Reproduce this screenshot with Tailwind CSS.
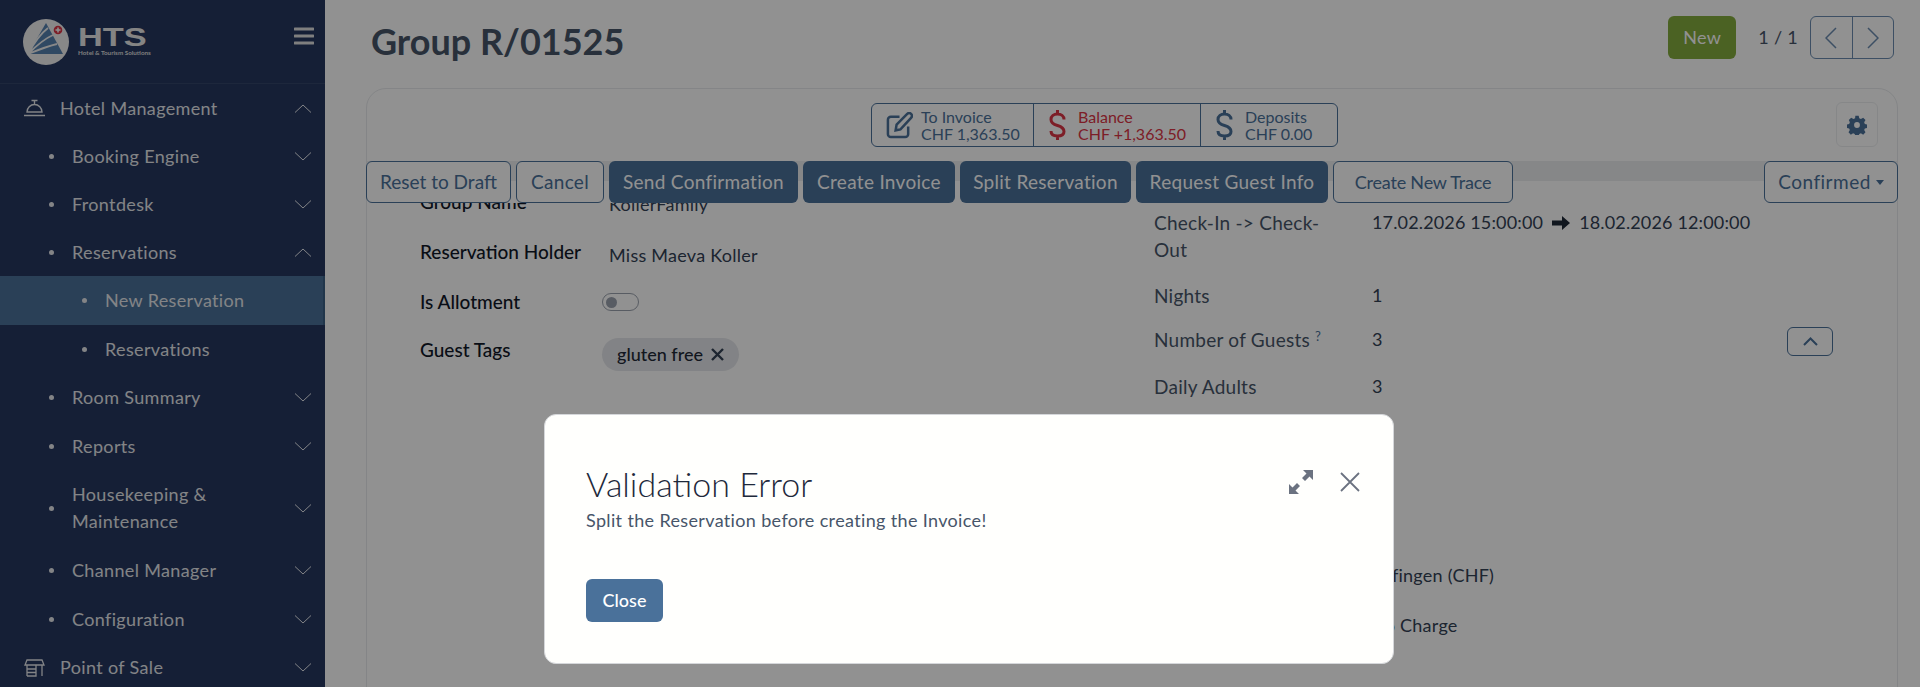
<!DOCTYPE html>
<html><head><meta charset="utf-8"><script src="https://cdn.jsdelivr.net/npm/@tailwindcss/browser@4"></script></head>
<body class="font-['Lato','Liberation_Sans',sans-serif] overflow-hidden">
<div class="relative w-[1920px] h-[687px] overflow-hidden flex bg-white text-[18px]">
  <!-- Sidebar -->
  <aside class="w-[325px] shrink-0 h-full bg-[#253760] text-[#e6e8ec] overflow-hidden tracking-[0.35px]">
    <div class="h-[84px] flex items-center justify-between pl-[23px] pr-[11px] border-b border-[#33456a]">
      <div class="flex items-center gap-[9px]">
        <svg width="46" height="46" viewBox="0 0 46 46"><circle cx="23" cy="23" r="23" fill="#f0f0f0"/><path d="M5 35L23 4L40 35Z" fill="#5580ae"/><path d="M5 35C11 24 17 15 25 9M5 35C13 27 21 20 30 16M5 35C15 31 25 27 34 25" stroke="#f0f0f0" stroke-width="1.800" fill="none"/><circle cx="35" cy="11" r="5.500" fill="#f0f0f0"/><circle cx="35" cy="11" r="4.300" fill="#dc3545"/><path d="M35 8.500v5M32.500 11h5" stroke="#fff" stroke-width="1.500"/></svg>
        <div class="leading-none tracking-normal"><div class="font-['Liberation_Sans',sans-serif] origin-left scale-x-[1.32] text-[26px] font-bold text-[#e8e8e8] h-[22px] leading-[22px]">HTS</div><div class="text-[6.300px] font-bold text-[#ddd] mt-[2px] whitespace-nowrap">Hotel &amp; Tourism Solutions</div></div>
      </div>
      <svg width="20" height="18" viewBox="0 0 20 18" class="mb-[11px]"><path d="M1 2h18M1 9h18M1 16h18" stroke="#e0e0e0" stroke-width="3" stroke-linecap="round"/></svg>
    </div>
    <nav>
      <div class="h-[48px] flex items-center justify-between pl-[24px] pr-[14px]"><span class="flex items-center gap-[15px]"><svg width="21" height="18" viewBox="0 0 21 18" fill="none" stroke="#e6e8ec" stroke-width="1.400"><path d="M3 13a7.500 7.500 0 0 1 15 0ZM0 16.500h21M7.500 1.500h6M10.500 1.500v4"/></svg>Hotel Management</span><svg width="16" height="9" viewBox="0 0 16 9" fill="none" stroke="#e6e8ec"><path d="M0 8.500L8 1l8 7.500"/></svg></div>
      <div class="h-[48px] flex items-center justify-between pl-[49px] pr-[14px]"><span class="flex items-center gap-[18px]"><span class="size-[5px] rounded-full bg-[#e6e8ec]"></span>Booking Engine</span><svg width="16" height="9" viewBox="0 0 16 9" fill="none" stroke="#e6e8ec"><path d="M0 .5L8 8l8-7.500"/></svg></div>
      <div class="h-[49px] flex items-center justify-between pl-[49px] pr-[14px]"><span class="flex items-center gap-[18px]"><span class="size-[5px] rounded-full bg-[#e6e8ec]"></span>Frontdesk</span><svg width="16" height="9" viewBox="0 0 16 9" fill="none" stroke="#e6e8ec"><path d="M0 .5L8 8l8-7.500"/></svg></div>
      <div class="h-[47px] flex items-center justify-between pl-[49px] pr-[14px]"><span class="flex items-center gap-[18px]"><span class="size-[5px] rounded-full bg-[#e6e8ec]"></span>Reservations</span><svg width="16" height="9" viewBox="0 0 16 9" fill="none" stroke="#e6e8ec"><path d="M0 8.500L8 1l8 7.500"/></svg></div>
      <div class="h-[49px] flex items-center pl-[82px] bg-[#4a719a] border-r-2 border-[#3a5f85]"><span class="flex items-center gap-[18px]"><span class="size-[5px] rounded-full bg-[#e6e8ec]"></span>New Reservation</span></div>
      <div class="h-[48px] flex items-center pl-[82px]"><span class="flex items-center gap-[18px]"><span class="size-[5px] rounded-full bg-[#e6e8ec]"></span>Reservations</span></div>
      <div class="h-[49px] flex items-center justify-between pl-[49px] pr-[14px]"><span class="flex items-center gap-[18px]"><span class="size-[5px] rounded-full bg-[#e6e8ec]"></span>Room Summary</span><svg width="16" height="9" viewBox="0 0 16 9" fill="none" stroke="#e6e8ec"><path d="M0 .5L8 8l8-7.500"/></svg></div>
      <div class="h-[48px] flex items-center justify-between pl-[49px] pr-[14px]"><span class="flex items-center gap-[18px]"><span class="size-[5px] rounded-full bg-[#e6e8ec]"></span>Reports</span><svg width="16" height="9" viewBox="0 0 16 9" fill="none" stroke="#e6e8ec"><path d="M0 .5L8 8l8-7.500"/></svg></div>
      <div class="h-[76px] flex items-center justify-between pl-[49px] pr-[14px]"><span class="flex items-center gap-[18px]"><span class="size-[5px] rounded-full bg-[#e6e8ec]"></span><span class="leading-[27px]">Housekeeping &amp;<br>Maintenance</span></span><svg width="16" height="9" viewBox="0 0 16 9" fill="none" stroke="#e6e8ec"><path d="M0 .5L8 8l8-7.500"/></svg></div>
      <div class="h-[49px] flex items-center justify-between pl-[49px] pr-[14px]"><span class="flex items-center gap-[18px]"><span class="size-[5px] rounded-full bg-[#e6e8ec]"></span>Channel Manager</span><svg width="16" height="9" viewBox="0 0 16 9" fill="none" stroke="#e6e8ec"><path d="M0 .5L8 8l8-7.500"/></svg></div>
      <div class="h-[48px] flex items-center justify-between pl-[49px] pr-[14px]"><span class="flex items-center gap-[18px]"><span class="size-[5px] rounded-full bg-[#e6e8ec]"></span>Configuration</span><svg width="16" height="9" viewBox="0 0 16 9" fill="none" stroke="#e6e8ec"><path d="M0 .5L8 8l8-7.500"/></svg></div>
      <div class="h-[49px] flex items-center justify-between pl-[24px] pr-[14px]"><span class="flex items-center gap-[15px]"><svg width="21" height="18" viewBox="0 0 21 18" fill="none" stroke="#e6e8ec" stroke-width="1.300"><path d="M3 1h15l2 5H1ZM3 6v11M18 6v11M3 10h9v7H3M3 13.500h9M12 6v11"/></svg>Point of Sale</span><svg width="16" height="9" viewBox="0 0 16 9" fill="none" stroke="#e6e8ec"><path d="M0 .5L8 8l8-7.500"/></svg></div>
    </nav>
  </aside>
  <!-- Main -->
  <main class="flex-1 h-full pl-[41px] pr-[22px] min-w-0">
    <div class="h-[88px] flex items-start justify-between">
      <h1 class="text-[36px] font-bold text-[#475569] mt-[18px] ml-[5px] leading-[46px]">Group R/01525</h1>
      <div class="flex items-center mt-[16px] mr-[4px]">
        <button class="w-[68px] h-[43px] rounded-[6px] bg-[#85ac3f] text-white tracking-[0.3px]">New</button>
        <span class="ml-[22px] text-[#475569] tracking-[0.3px]">1 / 1</span>
        <div class="ml-[12px] flex h-[43px] w-[84px] border border-[#6b8cb0] rounded-[6px]"><span class="flex-1 flex items-center justify-center border-r border-[#6b8cb0]"><svg width="12" height="22" viewBox="0 0 12 22" fill="none" stroke="#6b8cb0" stroke-width="1.500"><path d="M11 1L1 11l10 10"/></svg></span><span class="flex-1 flex items-center justify-center"><svg width="12" height="22" viewBox="0 0 12 22" fill="none" stroke="#6b8cb0" stroke-width="1.500"><path d="M1 1l10 10L1 21"/></svg></span></div>
      </div>
    </div>
    <section class="relative h-[620px] border border-[#e8eaed] rounded-t-[20px]">
      <div class="flex pt-[14px] h-[72px] pl-[504px]">
        <div class="flex h-[44px] border border-[#4a719a] rounded-[6px] text-[16px] leading-[17px] text-[#4a719a] whitespace-nowrap">
          <div class="w-[162px] flex items-center gap-[8px] pl-[14px] border-r border-[#4a719a]"><svg width="27" height="27" viewBox="0 0 28 28" fill="none" stroke="#4a719a" stroke-width="2.600"><path d="M14 5H5a3 3 0 0 0-3 3v15a3 3 0 0 0 3 3h15a3 3 0 0 0 3-3v-8"/><path d="M10 19l1-6L22 2a2.500 2.500 0 0 1 4 4L15 18Z"/></svg><div>To Invoice<br>CHF 1,363.50</div></div>
          <div class="w-[167px] flex items-center gap-[12px] pl-[15px] border-r border-[#4a719a] text-[#dc3545]"><svg width="17" height="30" viewBox="0 0 17 30" fill="none" stroke="#dc3545" stroke-width="3"><path d="M15 9.500c0-3.500-3-5.500-6.500-5.500S2 6 2 9.500s3 5 6.500 6 6.500 2.500 6.500 6-3 4.500-6.500 4.500S2 24.500 2 21M8.500 0v4M8.500 26v4"/></svg><div>Balance<br>CHF +1,363.50</div></div>
          <div class="w-[136px] flex items-center gap-[12px] pl-[15px]"><svg width="17" height="30" viewBox="0 0 17 30" fill="none" stroke="#4a719a" stroke-width="3"><path d="M15 9.500c0-3.500-3-5.500-6.500-5.500S2 6 2 9.500s3 5 6.500 6 6.500 2.500 6.500 6-3 4.500-6.500 4.500S2 24.500 2 21M8.500 0v4M8.500 26v4"/></svg><div>Deposits<br>CHF 0.00</div></div>
        </div>
      </div>
      <div class="absolute right-[19px] top-[13px] w-[42px] h-[45px] border border-[#eceef0] rounded-[6px] flex items-center justify-center"><svg width="20" height="20" viewBox="0 0 24 24" fill="#4a719a"><path d="M10 1h4l.7 3 2 .8 2.700-1.600 2.800 2.800-1.600 2.700.8 2 3 .7v4l-3 .7-.8 2 1.600 2.700-2.800 2.800-2.700-1.600-2 .8-.7 3h-4l-.7-3-2-.8-2.700 1.600-2.800-2.800 1.600-2.700-.8-2-3-.7v-4l3-.7.8-2L2.200 6 5 3.200l2.700 1.600 2-.8ZM12 8.500a3.500 3.500 0 1 0 0 7 3.500 3.500 0 0 0 0-7Z" fill-rule="evenodd"/></svg></div>
      <div class="absolute left-0 right-0 top-[72px] h-[20px] bg-[#eceef0]"></div>
      <div class="relative z-10 flex items-center justify-between -mr-[1px] -ml-[1px]">
        <div class="flex gap-[5px] text-[19px] tracking-[0.3px]">
          <button class="h-[42px] w-[145px] border border-[#4a719a] rounded-[6px] bg-white text-[#4a719a] tracking-normal">Reset to Draft</button>
          <button class="h-[42px] w-[88px] border border-[#4a719a] rounded-[6px] bg-white text-[#4a719a]">Cancel</button>
          <button class="h-[42px] w-[189px] rounded-[6px] bg-[#4a719a] text-white">Send Confirmation</button>
          <button class="h-[42px] w-[152px] rounded-[6px] bg-[#4a719a] text-white">Create Invoice</button>
          <button class="h-[42px] w-[171px] rounded-[6px] bg-[#4a719a] text-white">Split Reservation</button>
          <button class="h-[42px] w-[192px] rounded-[6px] bg-[#4a719a] text-white">Request Guest Info</button>
          <button class="h-[42px] w-[180px] border border-[#4a719a] rounded-[6px] bg-white text-[#4a719a] text-[18px] tracking-[-0.2px]">Create New Trace</button>
        </div>
        <button class="h-[42px] w-[134px] border border-[#4a719a] rounded-[6px] bg-white text-[#4a719a] flex items-center justify-center gap-[5px] text-[19px] tracking-[0.5px]">Confirmed<span class="border-x-[4px] border-x-transparent border-t-[5px] border-t-[#4a719a]"></span></button>
      </div>
      <div class="absolute left-0 right-0 top-[114px] bottom-0 overflow-hidden">
        <div class="ml-[53px] w-[1400px] flex text-[#334155]">
          <div class="w-[734px] -mt-[13px] grid grid-cols-[189px_1fr] auto-rows-max">
            <b class="font-medium text-[#111827] text-[19px] leading-[24px] h-[50px]">Group Name</b><span class="leading-[28px] h-[50px] tracking-[0.25px]">KollerFamily</span>
            <b class="font-medium text-[#111827] text-[19px] leading-[24px] h-[50px]">Reservation Holder</b><span class="leading-[30px] h-[50px] tracking-[0.25px]">Miss Maeva Koller</span>
            <b class="font-medium text-[#111827] text-[19px] leading-[24px] h-[48px]">Is Allotment</b><span class="h-[48px] pt-[3px] -ml-[7px]"><span class="relative block w-[37px] h-[18px] border border-[#9ca3af] rounded-full"><span class="absolute left-[3px] top-[3px] size-[11px] rounded-full bg-[#9ca3af]"></span></span></span>
            <b class="font-medium text-[#111827] text-[19px] leading-[24px]">Guest Tags</b><span class="-ml-[7px]"><span class="inline-flex items-center gap-[8px] h-[33px] px-[15px] rounded-full bg-[#e5e7eb] text-[#1f2937] font-medium">gluten free<svg width="13" height="13" viewBox="0 0 13 13" stroke="#334155" stroke-width="2.400"><path d="M1 1l11 11M12 1L1 12"/></svg></span></span>
          </div>
          <div class="mt-[6px] grid grid-cols-[218px_1fr] auto-rows-max text-[#475569] text-[19px] tracking-[0.25px]">
            <span class="leading-[27px] h-[73px] w-[178px]">Check-In -&gt; Check-Out</span><span class="text-[#334155] text-[18px] tracking-[0.15px] leading-[27px] flex items-center h-[27px] gap-[9px] whitespace-nowrap">17.02.2026 15:00:00 <svg width="18" height="14" viewBox="0 0 18 14" fill="#1f2937"><path d="M0 4.500h10V0l8 7-8 7V9.500H0Z"/></svg> 18.02.2026 12:00:00</span>
            <span class="h-[44px] leading-[27px]">Nights</span><span class="text-[#334155] text-[18px] leading-[27px]">1</span>
            <span class="h-[47px] leading-[27px]">Number of Guests <sup class="text-[#4a719a] text-[13px]">?</sup></span><span class="text-[#334155] text-[18px] leading-[27px]">3</span>
            <span class="h-[47px] leading-[27px]">Daily Adults</span><span class="text-[#334155] text-[18px] leading-[27px]">3</span>
          </div>
        </div>
      </div>
      <div class="absolute left-[1004px] top-[473px] text-[#334155] w-[200px] tracking-[0.25px]">Zofingen (CHF)</div>
      <div class="absolute left-[1004px] top-[523px] text-[#334155] w-[200px] tracking-[0.25px]">No Charge</div>
      <button class="absolute right-[64px] top-[238px] w-[46px] h-[29px] rounded-[6px] border border-[#4a719a] flex items-center justify-center"><svg width="15" height="9" viewBox="0 0 15 9" fill="none" stroke="#4a719a" stroke-width="2"><path d="M1 8l6.500-6.500L14 8"/></svg></button>
    </section>
  </main>
  <!-- Backdrop -->
  <div class="absolute inset-0 bg-black/43 z-20"></div>
  <!-- Modal -->
  <div class="absolute left-[544px] top-[414px] z-30 w-[850px] h-[250px] bg-[#fffffd] rounded-[12px] border border-[#d5d7da]">
    <div class="relative pl-[41px] pt-[49px] text-[#1f2937]">
      <h2 class="text-[34px] leading-[40px] text-[#1e293b] font-light">Validation Error</h2>
      <p class="mt-[3px] text-[18px] leading-[27px] text-[#475569] tracking-[0.35px]">Split the Reservation before creating the Invoice!</p>
      <button class="mt-[45px] w-[77px] h-[43px] rounded-[6px] bg-[#4a719a] text-white font-medium">Close</button>
      <svg class="absolute left-[743px] top-[54px]" width="26" height="26" viewBox="0 0 26 26" fill="#6b7280"><path d="M15 1h10v10l-3.500-3.500L17 12l-3-3 4.500-4.500ZM1 25V15l3.500 3.500L9 14l3 3-4.500 4.500L11 25Z"/></svg>
      <svg class="absolute left-[795px] top-[57px]" width="20" height="20" viewBox="0 0 20 20" stroke="#6b7280" stroke-width="1.800"><path d="M1 1l18 18M19 1L1 19"/></svg>
    </div>
  </div>
</div>
</body></html>
